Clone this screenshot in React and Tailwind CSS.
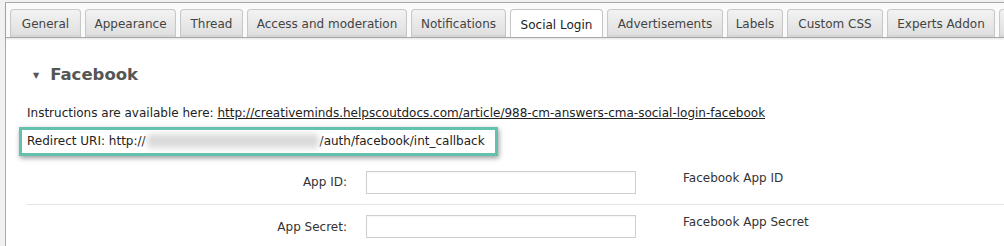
import React from 'react';

const tabs = [
    { label: 'General', w: 71 },
    { label: 'Appearance', w: 91 },
    { label: 'Thread', w: 63 },
    { label: 'Access and moderation', w: 160 },
    { label: 'Notifications', w: 95 },
    { label: 'Social Login', w: 93, active: true },
    { label: 'Advertisements', w: 116 },
    { label: 'Labels', w: 56 },
    { label: 'Custom CSS', w: 96 },
    { label: 'Experts Addon', w: 108 },
    { label: '', w: 60 },
];

function Row({ label, desc, border }) {
    return (
        <div className={`flex items-center h-[44px] ml-[20px] ${border ? 'border-b border-[#e6e6e6]' : ''}`}>
            <div className="w-[321px] text-right text-[12px] text-[#333]">{label}</div>
            <div className="ml-[19px] w-[270px] h-[23px] border border-[#cfcfcf] bg-white shadow-[inset_0_1px_1px_rgba(0,0,0,0.04)]" />
            <div className="ml-[47px] text-[12px] text-[#333] -mt-[9px]">{desc}</div>
        </div>
    );
}

export default function App() {
    return (
        <div className="w-[1004px] h-[246px] overflow-hidden bg-[#f1f1f1] pl-[5px] pt-[2px] font-['DejaVu_Sans',Verdana,sans-serif]">
            <div className="h-[260px] bg-white border border-[#a9a9a9] border-r-0">
                {/* tab strip */}
                <div className="flex gap-[4px] pl-[4px] pt-[6px] bg-[#fafafa] border-b border-[#a9a9a9] shadow-[0_1px_2px_rgba(0,0,0,0.12)] overflow-hidden">
                    {tabs.map((t) => (
                        <div
                            key={t.label || 'more'}
                            style={{ width: t.w }}
                            className={`shrink-0 h-[28px] -mb-px flex items-center justify-center pt-[1px] rounded-t-[4px] border border-b-0 text-[12px] whitespace-nowrap ${
                                t.active
                                    ? 'bg-white border-[#c4c4c4] text-[#222] h-[29px]'
                                    : 'bg-gradient-to-b from-[#f3f3f3] to-[#dedede] border-[#c8c8c8] text-[#444] shadow-[inset_0_-2px_2px_rgba(0,0,0,0.05)]'
                            }`}
                        >
                            {t.label}
                        </div>
                    ))}
                </div>

                {/* section */}
                <div className="pt-[29px]">
                    <h2 className="flex items-center ml-[27px] text-[16.5px] font-bold text-[#555] leading-none">
                        <span className="text-[8px] mr-[11px] mt-[2px]">▼</span>
                        Facebook
                    </h2>

                    <p className="mt-[20px] ml-[21px] text-[12px] text-[#222]">
                        Instructions are available here:{' '}
                        <span className="underline">http://creativeminds.helpscoutdocs.com/article/988-cm-answers-cma-social-login-facebook</span>
                    </p>

                    <div className="mt-[5px] ml-[13px] w-[479px] h-[29px] border-[3px] border-[#62c2ae] bg-white shadow-[1px_2px_5px_rgba(0,0,0,0.4)] flex items-center pl-[5px] text-[12px] text-[#222] whitespace-nowrap">
                        Redirect URI: http://
                        <span className="inline-block w-[172px] h-[14px] mx-[1px] bg-[#dadada] blur-[3px] rounded" />
                        /auth/facebook/int_callback
                    </div>

                    <div className="mt-[5px]">
                        <Row label="App ID:" desc="Facebook App ID" border />
                        <Row label="App Secret:" desc="Facebook App Secret" />
                    </div>
                </div>
            </div>
        </div>
    );
}
